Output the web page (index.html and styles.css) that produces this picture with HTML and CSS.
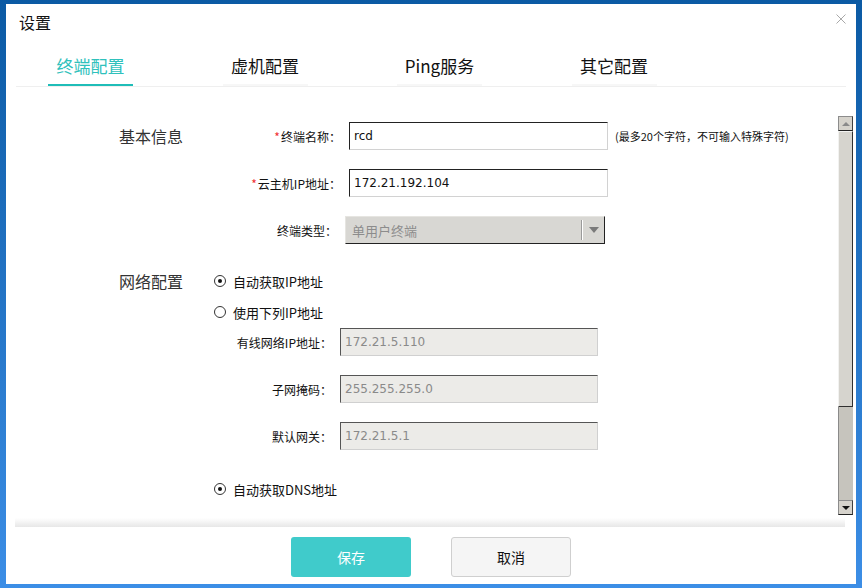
FILE: index.html
```html
<!DOCTYPE html>
<html lang="zh-CN">
<head>
  <meta charset="UTF-8">
  <title>设置</title>
  <link rel="stylesheet" href="styles.css">
</head>
<body>

  <div class="dialog">
    <div class="dialog-title">
      <span>设置</span>
      <svg class="close" width="10" height="10" viewBox="0 0 10 10">
        <path d="M0.5 0.5L9.5 9.5M9.5 0.5L0.5 9.5" stroke="#a8a8a8" stroke-width="1" fill="none"/>
      </svg>
    </div>

    <!-- Tabs -->
    <div class="tabs">
      <div class="tab active">终端配置</div>
      <div class="tab">虚机配置</div>
      <div class="tab">Ping服务</div>
      <div class="tab">其它配置</div>
    </div>

    <div class="scroll-box">
      <div class="scroll-content">

        <!-- Basic info -->
        <div class="section">
          <div class="section-title">基本信息</div>
          <div class="section-rows">
            <div class="row">
              <label class="row-label"><span class="req">*</span>终端名称<span class="colon">：</span></label>
              <input class="text-input" value="rcd">
              <span class="hint">(最多20个字符，不可输入特殊字符)</span>
            </div>
            <div class="row">
              <label class="row-label"><span class="req">*</span>云主机IP地址<span class="colon">：</span></label>
              <input class="text-input" value="172.21.192.104">
            </div>
            <div class="row">
              <label class="row-label type-label">终端类型<span class="colon">：</span></label>
              <div class="select">
                <span class="select-text">单用户终端</span>
                <span class="select-arrow"></span>
              </div>
            </div>
          </div>
        </div>

        <!-- Network -->
        <div class="section net">
          <div class="section-title">网络配置</div>
          <div class="section-rows">
            <div class="radio-row"><span class="radio checked"></span>自动获取IP地址</div>
            <div class="radio-row manual"><span class="radio"></span>使用下列IP地址</div>
            <div class="sub-rows">
              <div class="row">
                <label class="row-label net-label">有线网络IP地址<span class="colon">：</span></label>
                <input class="text-input disabled" value="172.21.5.110" disabled>
              </div>
              <div class="row">
                <label class="row-label net-label">子网掩码<span class="colon">：</span></label>
                <input class="text-input disabled" value="255.255.255.0" disabled>
              </div>
              <div class="row">
                <label class="row-label net-label">默认网关<span class="colon">：</span></label>
                <input class="text-input disabled" value="172.21.5.1" disabled>
              </div>
            </div>
            <div class="radio-row dns"><span class="radio checked"></span>自动获取DNS地址</div>
          </div>
        </div>

      </div>

      <!-- Classic scrollbar -->
      <div class="scrollbar">
        <div class="sb-btn sb-up"></div>
        <div class="sb-thumb"></div>
        <div class="sb-track"></div>
        <div class="sb-btn sb-down"></div>
      </div>
    </div>

    <div class="band"></div>

    <div class="footer">
      <button class="btn btn-save">保存</button>
      <button class="btn btn-cancel">取消</button>
    </div>
  </div>

</body>
</html>
```

FILE: styles.css
```css
* {
  box-sizing: border-box;
}

body {
  margin: 0;
  height: 100vh;
  padding: 4px 6px;
  background: linear-gradient(#0b5aa4, #3c8ee6);
  font-family: "Noto Sans CJK SC", sans-serif;
  color: #222;
  overflow: hidden;
}

.dialog {
  background-color: #fff;
  height: 580px;
  display: flex;
  flex-direction: column;
  padding-top: 7px;
}

.dialog-title {
  display: flex;
  justify-content: space-between;
  align-items: flex-start;
  padding: 0 10px 0 13px;
  font-size: 16px;
  line-height: 22px;
  color: #111;
}

.close {
  margin-top: 3px;
}

.tabs {
  display: flex;
  gap: 89.5px;
  margin: 11px 10px 0;
  padding-left: 32px;
  border-bottom: 1px solid #efefef;
}

.tab {
  width: 85px;
  text-align: center;
  padding-top: 4px;
  font-size: 17px;
  line-height: 36px;
  color: #111;
  border-bottom: 2px solid #f7f7f7;
}

.tab.active {
  color: #2fc1bc;
  border-bottom-color: #1fbdb8;
}

.scroll-box {
  display: flex;
  height: 399px;
  margin: 29px 3px 0 10px;
}

.scroll-content {
  flex: 1;
  padding: 6px 0 0 103px;
}

.section {
  display: flex;
}

.section-title {
  width: 95px;
  font-size: 16px;
  line-height: 28px;
  color: #333;
}

.section-rows {
  display: flex;
  flex-direction: column;
  gap: 19px;
}

.row {
  display: flex;
  align-items: center;
  height: 28px;
}

.row-label {
  width: 127px;
  margin-right: 8px;
  text-align: right;
  font-size: 12px;
  color: #111;
}

.type-label {
  width: 123px;
}

.colon {
  font-family: "Noto Sans CJK TC", sans-serif;
}

.req {
  color: #f03030;
  margin-right: 1px;
}

.text-input {
  width: 259px;
  height: 28px;
  padding: 0 4px;
  border: 1px solid;
  border-color: #222 #d2d2d2 #d2d2d2 #222;
  background-color: #fff;
  font-family: "DejaVu Sans", sans-serif;
  font-size: 12px;
  color: #111;
  outline: none;
}

.text-input.disabled {
  width: 258px;
  background-color: #ecebe8;
  border-color: #555 #d0d0d0 #d0d0d0 #555;
  color: #8a8a8a;
}

.hint {
  margin-left: 7px;
  font-size: 11px;
  color: #111;
}

.select {
  display: flex;
  align-items: center;
  width: 260px;
  height: 28px;
  background-color: #d8d7d3;
  border: 1px solid;
  border-color: #e6e5e1 #222 #222 #e6e5e1;
}

.select-text {
  flex: 1;
  padding-left: 6px;
  font-size: 13px;
  color: #8c8c8c;
}

.select-arrow {
  width: 22px;
  height: 20px;
  border-left: 1px solid #fff;
  box-shadow: -1px 0 0 #9a9a9a;
  display: flex;
  align-items: center;
  justify-content: center;
}

.select-arrow::after {
  content: "";
  border-left: 5px solid transparent;
  border-right: 5px solid transparent;
  border-top: 6px solid #7a7a7a;
}

/* network section */
.net {
  margin-top: 27px;
}

.net .section-title {
  line-height: 20px;
}

.net .section-rows {
  gap: 0;
}

.net-label {
  width: 118px;
}

.radio-row {
  display: flex;
  align-items: center;
  height: 20px;
  font-size: 13px;
  color: #111;
}

.radio-row.manual {
  margin-top: 11px;
}

.radio-row.dns {
  margin-top: 29px;
}

.sub-rows {
  display: flex;
  flex-direction: column;
  gap: 19px;
  margin-top: 6px;
}

.radio {
  width: 12px;
  height: 12px;
  margin-right: 7px;
  border: 1px solid #333;
  border-radius: 50%;
  display: flex;
  align-items: center;
  justify-content: center;
}

.radio.checked::after {
  content: "";
  width: 4px;
  height: 4px;
  border-radius: 50%;
  background-color: #111;
}

/* old style scrollbar */
.scrollbar {
  width: 15px;
  display: flex;
  flex-direction: column;
}

.sb-btn {
  height: 15px;
  background-color: #d6d3cc;
  border: 1px solid;
  border-color: #8c8c8c #404040 #222 #8c8c8c;
  display: flex;
  align-items: center;
  justify-content: center;
}

.sb-up::after {
  content: "";
  border-left: 4px solid transparent;
  border-right: 4px solid transparent;
  border-bottom: 4px solid #8a8a8a;
}

.sb-down::after {
  content: "";
  border-left: 4px solid transparent;
  border-right: 4px solid transparent;
  border-top: 4px solid #111;
}

.sb-thumb {
  height: 276px;
  background-color: #d6d4ce;
  border: 1px solid;
  border-color: #f2f2f0 #303030 #303030 #f2f2f0;
}

.sb-track {
  flex: 1;
  background-color: #c6c4bd;
  border-left: 1px solid #8a8a8a;
}

.band {
  height: 9px;
  margin: 3px 11px 0 9px;
  background: linear-gradient(#fff, #e7e7e7);
}

.footer {
  display: flex;
  justify-content: center;
  gap: 40px;
  padding-top: 10px;
}

.btn {
  width: 120px;
  height: 40px;
  border-radius: 3px;
  font-family: "Noto Sans CJK SC", sans-serif;
  font-size: 14px;
  cursor: pointer;
}

.btn-save {
  background-color: #40cbcb;
  border: none;
  color: #fff;
}

.btn-cancel {
  background-color: #f5f5f5;
  border: 1px solid #cfcfcf;
  color: #111;
}
```
